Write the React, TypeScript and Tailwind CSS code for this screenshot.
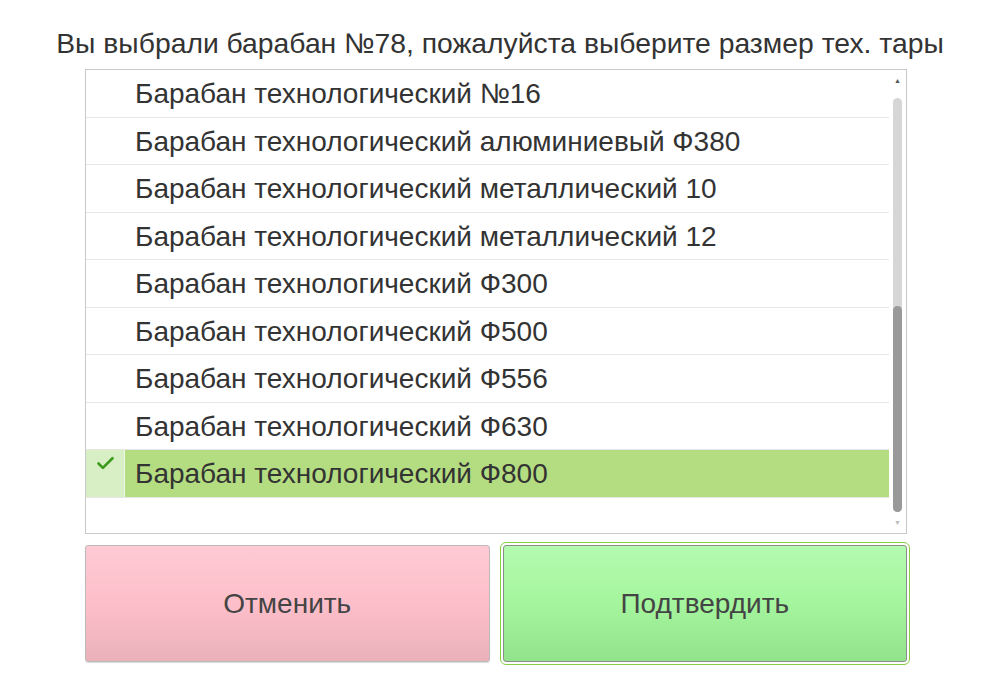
import { Check } from 'lucide-react';

const items = [
	'Барабан технологический №16',
	'Барабан технологический алюминиевый Ф380',
	'Барабан технологический металлический 10',
	'Барабан технологический металлический 12',
	'Барабан технологический Ф300',
	'Барабан технологический Ф500',
	'Барабан технологический Ф556',
	'Барабан технологический Ф630',
	'Барабан технологический Ф800',
];

const selected = 8;

export default function App() {
	return (
		<div
			className="w-[1000px] h-[687px] bg-white text-[#333]"
			style={{ fontFamily: '"Liberation Sans", Arial, sans-serif' }}
		>
			<div className="h-[69px] pt-[26px] text-center text-[28.3px] leading-[34px]">
				Вы выбрали барабан №78, пожалуйста выберите размер тех. тары
			</div>

			<div className="mx-[85px] w-[822px]">
				{/* List */}
				<div className="flex h-[465px] border border-[#c9c9c9]">
					<div className="flex-1">
						{items.map((item, i) => (
							<div
								key={item}
								className="flex h-[47.5px] border-b border-[#e6e6e6]"
							>
								<div
									className={
										i === selected
											? 'w-[39px] h-full bg-[#d8efc5] border-r border-[#eef7e6] flex justify-center pt-[3px]'
											: 'w-[39px] h-full'
									}
								>
									{i === selected && (
										<Check className="w-[21px] h-[21px] text-[#3d9a1c]" strokeWidth={3} />
									)}
								</div>
								<div
									className={
										i === selected
											? 'flex-1 bg-[#b4dd81] pl-[10px] pt-[2px] flex items-center text-[28px]'
											: 'flex-1 pl-[10px] pt-[2px] flex items-center text-[28px]'
									}
								>
									{item}
								</div>
							</div>
						))}
					</div>

					{/* Scrollbar */}
					<div className="w-[17px] flex flex-col items-center pt-[7px] pb-[6px]">
						<div className="text-[7px] leading-[8px] text-[#555]">▲</div>
						<div className="flex-1 w-[9px] mt-[13px] mb-[7px] rounded-full bg-[#d6d6d6] flex flex-col justify-end">
							<div className="h-[206px] w-full rounded-full bg-[#999]" />
						</div>
						<div className="text-[7px] leading-[8px] text-[#bbb]">▼</div>
					</div>
				</div>

				{/* Buttons */}
				<div className="mt-[11px] grid grid-cols-2 gap-[13px]">
					<button className="h-[117px] rounded-[3px] border border-[#bbb] bg-gradient-to-b from-[#fecad3] via-[#fdbfca] to-[#eab1ba] text-[28px] text-[#444] shadow-[0_1px_1px_rgba(0,0,0,0.15)]">
						Отменить
					</button>
					<button className="h-[117px] rounded-[3px] border border-[#8c8c8c] bg-gradient-to-b from-[#b4fbb0] via-[#a4f59d] to-[#93e28c] text-[28px] text-[#444] outline outline-1 outline-offset-2 outline-[#86cf3e]">
						Подтвердить
					</button>
				</div>
			</div>
		</div>
	);
}
